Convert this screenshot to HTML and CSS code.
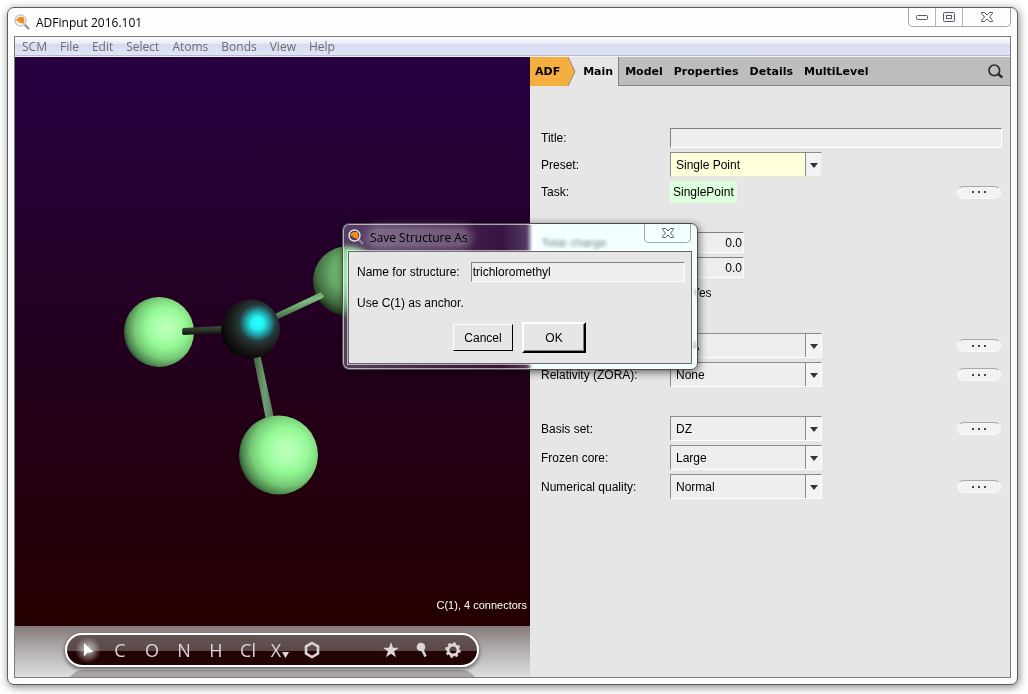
FILE: index.html
```html
<!DOCTYPE html>
<html lang="en">
<head>
  <meta charset="UTF-8">
  <meta name="viewport" content="width=device-width, initial-scale=1.0">
  <title>ADFinput 2016.101</title>
  <link rel="stylesheet" href="styles.css">
</head>
<body>
  <div class="window">
    <header class="titlebar">
      <svg class="app-icon" viewBox="0 0 17 17" width="17" height="17">
        <path d="M10 10l5 5" stroke="#8a8a8a" stroke-width="2"/>
        <circle cx="6.500" cy="6.500" r="5.500" fill="#f4f4f4" stroke="#c9c9c9" stroke-width="1.400"/>
        <path d="M2.500 5l3-2 4 0 1 4-1 3-2-1-2 0-1-2-2 0z" fill="#f58a1f"/>
      </svg>
      <span class="title">ADFinput 2016.101</span>
      <div class="window-buttons">
        <button type="button" aria-label="Minimize">
          <svg viewBox="0 0 12 5" width="12" height="5"><rect x=".5" y=".5" width="11" height="4" rx="1" fill="#fff" stroke="#55586a"/></svg>
        </button>
        <button type="button" aria-label="Maximize">
          <svg viewBox="0 0 12 10" width="12" height="10"><rect x=".5" y=".5" width="11" height="9" rx="1" fill="#f4f4f4" stroke="#55586a"/><rect x="3.500" y="3.500" width="5" height="3" fill="#fff" stroke="#55586a"/></svg>
        </button>
        <button type="button" class="close" aria-label="Close">
          <svg viewBox="0 0 12 10" width="12" height="10"><path d="M.5.5h3l2.500 2.500 2.500-2.500h3v1L8.500 5l3 3.500v1h-3L6 7 3.500 9.500h-3v-1L3.500 5l-3-3.500z" fill="#fff" stroke="#55586a"/></svg>
        </button>
      </div>
    </header>

    <div class="client">
      <nav class="menubar">
        <a href="#">SCM</a>
        <a href="#">File</a>
        <a href="#">Edit</a>
        <a href="#">Select</a>
        <a href="#">Atoms</a>
        <a href="#">Bonds</a>
        <a href="#">View</a>
        <a href="#">Help</a>
      </nav>

      <main class="workspace">
        <section class="editor">
          <div class="viewport">
            <svg class="molecule" viewBox="15 57 515 569" preserveAspectRatio="xMinYMin meet">
              <defs>
                <radialGradient id="chlorine" cx=".6" cy=".44" r=".64">
                  <stop offset="0" stop-color="#bdffbd"/>
                  <stop offset=".2" stop-color="#b0ffb0"/>
                  <stop offset=".45" stop-color="#94f894"/>
                  <stop offset=".7" stop-color="#76c976"/>
                  <stop offset=".88" stop-color="#4c844c"/>
                  <stop offset="1" stop-color="#1e361e"/>
                </radialGradient>
                <radialGradient id="chlorine-far" cx=".55" cy=".38" r=".66">
                  <stop offset="0" stop-color="#7cca7c"/>
                  <stop offset=".45" stop-color="#68aa68"/>
                  <stop offset=".75" stop-color="#437043"/>
                  <stop offset="1" stop-color="#0f1d0f"/>
                </radialGradient>
                <radialGradient id="carbon" cx=".62" cy=".4" r=".65">
                  <stop offset="0" stop-color="#2ff"/>
                  <stop offset=".16" stop-color="#25f2f4"/>
                  <stop offset=".32" stop-color="#209ba0"/>
                  <stop offset=".48" stop-color="#26393b"/>
                  <stop offset=".7" stop-color="#1c1c1c"/>
                  <stop offset="1" stop-color="#050505"/>
                </radialGradient>
                <linearGradient id="bond-left" x1="0" y1="0" x2="0" y2="1">
                  <stop offset="0" stop-color="#3d5340"/>
                  <stop offset=".4" stop-color="#2b3a2d"/>
                  <stop offset="1" stop-color="#0d120d"/>
                </linearGradient>
                <linearGradient id="bond-right" x1="0" y1="0" x2=".35" y2="1">
                  <stop offset="0" stop-color="#4b7a4b"/>
                  <stop offset=".5" stop-color="#7fbc80"/>
                  <stop offset="1" stop-color="#334f35"/>
                </linearGradient>
                <linearGradient id="bond-bottom" x1="0" y1="0" x2="1" y2="0">
                  <stop offset="0" stop-color="#3d5c3e"/>
                  <stop offset=".55" stop-color="#6f9f70"/>
                  <stop offset="1" stop-color="#537a54"/>
                </linearGradient>
              </defs>
              <circle cx="348" cy="281" r="35" fill="url(#chlorine-far)"/>
              <circle cx="159" cy="332" r="35" fill="url(#chlorine)"/>
              <path d="M183 328l40-2v7l-40 2q-2-3 0-7z" fill="url(#bond-left)"/>
              <path d="M275 314l46-22 3 4-1 2-45 21z" fill="url(#bond-right)"/>
              <path d="M253 355l7-1 14 64-8 2z" fill="url(#bond-bottom)"/>
              <circle cx="250.500" cy="329" r="29.500" fill="url(#carbon)"/>
              <circle cx="278.500" cy="455" r="39.500" fill="url(#chlorine)"/>
            </svg>
            <p class="status">C(1), 4 connectors</p>
          </div>

          <div class="toolbar">
            <div class="pill">
              <button type="button" class="tool active" aria-label="Select">
                <svg viewBox="0 0 12 16" width="12" height="16"><path d="M2 1l9.500 9-4 .5L5 11l-3 3.500z" fill="#fff"/></svg>
              </button>
              <button type="button" class="tool">C</button>
              <button type="button" class="tool">O</button>
              <button type="button" class="tool">N</button>
              <button type="button" class="tool">H</button>
              <button type="button" class="tool">Cl</button>
              <button type="button" class="tool">X<svg class="caret" viewBox="0 0 7 6" width="7" height="6"><path d="M0 0h7L3.500 6z" fill="#ddd6d6"/></svg></button>
              <button type="button" class="tool" aria-label="Ring">
                <svg viewBox="0 0 16 18" width="16" height="18"><path d="M8 2l6 3.500v7L8 16l-6-3.500v-7z" fill="none" stroke="#ddd6d6" stroke-width="2.600"/></svg>
              </button>
              <div class="extras">
                <button type="button" class="tool" aria-label="Favorites">
                  <svg viewBox="0 0 16 16" width="16" height="16"><path d="M8 0l2 5.700h6l-4.900 3.600L13 15.300 8 11.700 3 15.300l1.900-6L0 5.700h6z" fill="#ddd6d6"/></svg>
                </button>
                <button type="button" class="tool" aria-label="Pre-optimize">
                  <svg viewBox="0 0 12 16" width="12" height="16"><circle cx="5" cy="5" r="4.300" fill="#ddd6d6"/><path d="M6 7l3.500 7.500" stroke="#ddd6d6" stroke-width="2.600"/></svg>
                </button>
                <button type="button" class="tool" aria-label="Settings">
                  <svg viewBox="0 0 16 16" width="16" height="16"><circle cx="8" cy="8" r="5" fill="none" stroke="#ddd6d6" stroke-width="2.800"/><circle cx="8" cy="8" r="6.900" fill="none" stroke="#ddd6d6" stroke-width="1.800" stroke-dasharray="2.700 2.720"/></svg>
                </button>
              </div>
            </div>
          </div>
        </section>

        <section class="panel">
          <nav class="tabs">
            <a href="#" class="tab adf">ADF<svg class="tip" viewBox="0 0 8 29" width="8" height="29"><path d="M0 0l7 14.500L0 29z" fill="#f6ae40"/><path d="M0 0l7 14.500L0 29" fill="none" stroke="#8a8a8a"/></svg></a>
            <a href="#" class="tab current">Main</a>
            <a href="#" class="tab">Model</a>
            <a href="#" class="tab">Properties</a>
            <a href="#" class="tab">Details</a>
            <a href="#" class="tab">MultiLevel</a>
            <button type="button" class="search" aria-label="Search">
              <svg viewBox="0 0 15 15" width="15" height="15"><circle cx="6.300" cy="6.300" r="5.300" fill="none" stroke="#2c2c2c" stroke-width="1.700"/><path d="M10 10l4.300 3.600" stroke="#2c2c2c" stroke-width="2.400"/></svg>
            </button>
          </nav>

          <form class="settings">
            <div class="group">
              <div class="row">
                <label for="title">Title:</label>
                <input type="text" id="title" class="field">
              </div>
              <div class="row">
                <label for="preset">Preset:</label>
                <span class="dropdown preset"><select id="preset"><option>Single Point</option></select></span>
              </div>
              <div class="row">
                <span>Task:</span>
                <span class="value">SinglePoint</span>
                <button type="button" class="more" aria-label="Task details"></button>
              </div>
            </div>

            <div class="group">
              <div class="row">
                <label for="charge">Total charge:</label>
                <input type="text" id="charge" class="field number" value="0.0">
              </div>
              <div class="row">
                <input type="text" class="field number" value="0.0" aria-label="Spin polarization">
              </div>
              <div class="row check-row">
                <label class="check"><input type="checkbox">Yes</label>
              </div>
            </div>

            <div class="group">
              <div class="row">
                <span class="dropdown"><select aria-label="XC functional"><option>LDA</option></select></span>
                <button type="button" class="more" aria-label="XC details"></button>
              </div>
              <div class="row">
                <label for="relativity">Relativity (ZORA):</label>
                <span class="dropdown"><select id="relativity"><option>None</option></select></span>
                <button type="button" class="more" aria-label="Relativity details"></button>
              </div>
            </div>

            <div class="group">
              <div class="row">
                <label for="basis">Basis set:</label>
                <span class="dropdown"><select id="basis"><option>DZ</option></select></span>
                <button type="button" class="more" aria-label="Basis details"></button>
              </div>
              <div class="row">
                <label for="core">Frozen core:</label>
                <span class="dropdown"><select id="core"><option>Large</option></select></span>
              </div>
              <div class="row">
                <label for="quality">Numerical quality:</label>
                <span class="dropdown"><select id="quality"><option>Normal</option></select></span>
                <button type="button" class="more" aria-label="Quality details"></button>
              </div>
            </div>
          </form>
        </section>
      </main>
    </div>

    <div class="dialog" role="dialog" aria-labelledby="dialog-title">
      <header class="dialog-bar">
        <svg class="app-icon" viewBox="0 0 17 17" width="17" height="17">
          <path d="M10 10l5 5" stroke="#8a8a8a" stroke-width="2"/>
          <circle cx="6.500" cy="6.500" r="5.500" fill="#4d3d55" stroke="#e4e0e6" stroke-width="1.400"/>
          <path d="M2.500 5l3-2 4 0 1 4-1 3-2-1-2 0-1-2-2 0z" fill="#f58a1f"/>
        </svg>
        <span class="title" id="dialog-title">Save Structure As</span>
        <div class="window-buttons">
          <button type="button" class="close" aria-label="Close">
            <svg viewBox="0 0 12 10" width="12" height="10"><path d="M.5.5h3l2.500 2.500 2.500-2.500h3v1L8.500 5l3 3.500v1h-3L6 7 3.500 9.500h-3v-1L3.500 5l-3-3.500z" fill="#fff" stroke="#55586a"/></svg>
          </button>
        </div>
      </header>
      <form class="dialog-body">
        <div class="name-row">
          <label for="structure">Name for structure:</label>
          <input type="text" id="structure" class="field" value="trichloromethyl">
        </div>
        <p>Use C(1) as anchor.</p>
        <div class="actions">
          <button type="button" class="push">Cancel</button>
          <button type="button" class="push default">OK</button>
        </div>
      </form>
    </div>
  </div>
</body>
</html>
```

FILE: styles.css
```css
* {
  box-sizing: border-box;
}
body {
  margin: 0;
  min-height: 100vh;
  padding: 7px 10px 9px 7px;
  display: flex;
  background-color: #fff;
  font-family: "Liberation Sans", Arial, sans-serif;
  font-size: 12px;
  color: #000;
}
button, input, select {
  font: inherit;
  color: inherit;
  margin: 0;
}
a {
  color: inherit;
  text-decoration: none;
}
p {
  margin: 0;
}
svg {
  display: block;
}

/* window frame */
.window {
  position: relative;
  flex: 1;
  display: flex;
  flex-direction: column;
  padding: 0 6px 6px;
  border: 1px solid #5c5c5c;
  border-radius: 7px;
  background-color: #fdfdfd;
  box-shadow: 1px 2px 8px rgba(0, 0, 0, 0.5);
}
.titlebar {
  display: flex;
  align-items: center;
  height: 28px;
}
.app-icon {
  flex: none;
  margin-right: 5px;
}
.title {
  font-family: "Open Sans", "Noto Sans", sans-serif;
  font-size: 12px;
}
.window-buttons {
  display: flex;
  align-self: flex-start;
  margin-left: auto;
  border: 1px solid #a5a5a5;
  border-top: none;
  border-radius: 0 0 5px 5px;
}
.window-buttons button {
  display: flex;
  align-items: center;
  justify-content: center;
  width: 27px;
  height: 18px;
  padding: 0;
  border: none;
  border-right: 1px solid #b5b5b5;
  background: none;
}
.window-buttons .close {
  width: 47px;
  border-right: none;
}
.client {
  flex: 1;
  display: flex;
  flex-direction: column;
  border: 1px solid #7b7b7b;
}
.menubar {
  display: flex;
  align-items: center;
  gap: 13px;
  height: 20px;
  padding: 0 7px;
  border-bottom: 1px solid #f2f2f2;
  background: linear-gradient(#fbfcfe 0, #e6ebf6 7px, #d4dbed 7px, #dfe5f6 18px, #b4bac8 18px);
  font-family: "Open Sans", "Noto Sans", sans-serif;
  color: #6d6d6d;
}

/* molecule editor */
.workspace {
  flex: 1;
  display: grid;
  grid-template-columns: minmax(0, 515fr) minmax(0, 480fr);
}
.editor {
  display: flex;
  flex-direction: column;
}
.viewport {
  position: relative;
  flex: 1;
  overflow: hidden;
  background: linear-gradient(#260041, #23001f 50%, #240000);
}
.molecule {
  position: absolute;
  width: 100%;
  height: 100%;
}
.status {
  position: absolute;
  right: 3px;
  bottom: 15px;
  font-size: 11px;
  color: #fff;
}
.toolbar {
  position: relative;
  height: 51px;
  padding: 7px 51px 0 50px;
  overflow: hidden;
  background: linear-gradient(#857a7a, #b1acac 45%, #dedede);
}
.pill {
  position: relative;
  display: flex;
  align-items: center;
  height: 34px;
  padding: 0 9px 0 5px;
  border: 2px solid #fff;
  border-radius: 17px;
  background: linear-gradient(#655454, #5b4949 52%, #220202 52%, #240505);
  box-shadow: 0 2px 4px rgba(0, 0, 0, 0.6);
}
.toolbar::before {
  content: "";
  position: absolute;
  top: 42px;
  left: 51px;
  right: 51px;
  height: 34px;
  border: 2px solid #d8d6d6;
  border-radius: 17px;
  background-color: #aba6a6;
}
.tool {
  display: flex;
  align-items: center;
  justify-content: center;
  width: 32px;
  height: 30px;
  padding: 0;
  border: none;
  background: none;
  font-family: "Open Sans", "Noto Sans", sans-serif;
  font-size: 18px;
  font-weight: 500;
  color: #ddd6d6;
}
.active {
  background: radial-gradient(circle, rgba(255, 255, 255, 0.7), rgba(255, 255, 255, 0) 13px);
}
.caret {
  margin-top: 10px;
  margin-left: 1px;
}
.extras {
  display: flex;
  margin-left: auto;
}
.extras .tool {
  width: 31px;
}

/* settings panel */
.panel {
  background-color: #e6e6e6;
}
.tabs {
  display: flex;
  height: 29px;
  background-color: #bdbdbd;
  box-shadow: inset 0 -1px #828282;
  font-family: "DejaVu Sans", Verdana, sans-serif;
  font-size: 11px;
  font-weight: bold;
  line-height: 29px;
}
.tab {
  padding: 0 5px 0 6px;
}
.adf {
  position: relative;
  padding: 0 8px 0 5px;
  background-color: #f6ae40;
}
.tip {
  position: absolute;
  top: 0;
  left: 100%;
}
.current {
  padding-left: 15px;
  border-right: 1px solid #828282;
  background-color: #e6e6e6;
}
.search {
  margin-left: auto;
  padding: 0 7px;
  border: none;
  background: none;
}
.settings {
  display: flex;
  flex-direction: column;
  gap: 29px;
  padding: 42px 8px 42px 11px;
}
.group {
  display: flex;
  flex-direction: column;
  gap: 4px;
}
.row {
  display: grid;
  grid-template-columns: 129px 1fr auto;
  align-items: center;
}
.field {
  width: 100%;
  height: 20px;
  padding: 0 1px;
  border: 1px solid #fff;
  border-top-color: #828282;
  border-left-color: #828282;
  border-radius: 0;
  outline: none;
  background-color: #eee;
}
.row .field {
  grid-column: 2 / 4;
}
.row .number {
  width: 74px;
  height: 21px;
  text-align: right;
}
.check-row {
  height: 22px;
}
.check {
  grid-column: 2;
  display: flex;
  align-items: center;
  gap: 9px;
}
.check input {
  width: 13px;
  height: 13px;
}
.dropdown {
  position: relative;
  grid-column: 2;
  width: 152px;
  height: 25px;
  border: 1px solid #fff;
  border-top-color: #8c8c8c;
  border-left-color: #8c8c8c;
  background: linear-gradient(to left, #f3f3f3 15px, #8c8c8c 15px, #8c8c8c 16px, #eee 16px);
}
.dropdown::after {
  content: "";
  position: absolute;
  top: 10px;
  right: 3px;
  border: 4px solid transparent;
  border-top: 5px solid #333;
  border-bottom: none;
  pointer-events: none;
}
.dropdown select {
  width: 100%;
  height: 100%;
  padding: 0 20px 0 5px;
  border: none;
  outline: none;
  background: none;
  appearance: none;
}
.preset {
  border-right-color: #e9e9cf;
  border-bottom-color: #e9e9cf;
  background: linear-gradient(to left, #f3f3f3 15px, #8c8c8c 15px, #8c8c8c 16px, #ffffdc 16px);
}
.value {
  justify-self: start;
  padding: 0 3px;
  background-color: #dfd;
  line-height: 22px;
}
.more {
  display: flex;
  align-items: center;
  justify-content: center;
  width: 44px;
  height: 13px;
  margin-right: 1px;
  padding: 0;
  border: 1px solid #fafafa;
  border-top-color: #a8a8a8;
  border-radius: 7px;
  background-color: #f3f3f3;
}
.more::before {
  content: "";
  width: 14px;
  height: 2px;
  background: repeating-linear-gradient(to right, #444 0, #444 2px, transparent 2px, transparent 6px);
}

/* save dialog */
.dialog {
  position: absolute;
  top: 215px;
  left: 334px;
  width: 356px;
  padding: 0 5px 5px;
  border: 1px solid #4c4c50;
  border-radius: 7px;
  background: linear-gradient(to right, rgba(220, 255, 255, 0.25), rgba(220, 255, 255, 0.08) 45%, rgba(220, 255, 255, 0.4) 60%);
  box-shadow: inset 0 0 0 1px rgba(255, 255, 255, 0.6), 1px 2px 9px rgba(0, 0, 0, 0.6);
  backdrop-filter: blur(2px) brightness(1.2);
}
.dialog-bar {
  display: flex;
  align-items: center;
  height: 27px;
}
.dialog-bar .title {
  border-radius: 8px;
  background-color: rgba(255, 255, 255, 0.25);
  box-shadow: 0 0 8px 4px rgba(255, 255, 255, 0.25);
}
.dialog-bar .close {
  width: 45px;
}
.dialog-bar .window-buttons {
  margin-right: 1px;
}
.dialog-body {
  padding: 10px 6px 10px 8px;
  border: 1px solid #66666c;
  outline: 1px solid rgba(255, 255, 255, 0.6);
  background-color: #e6e6e6;
}
.name-row {
  display: flex;
  align-items: center;
  gap: 11px;
  margin-bottom: 14px;
}
.name-row label {
  white-space: nowrap;
}
.actions {
  display: flex;
  align-items: center;
  justify-content: center;
  gap: 9px;
  margin-top: 12px;
  padding-right: 3px;
}
.push {
  width: 60px;
  height: 27px;
  padding: 0;
  border: 1px solid #fff;
  border-right: 1px solid #000;
  border-bottom: 1px solid #000;
  border-radius: 0;
  background-color: #e6e6e6;
}
.default {
  width: 64px;
  height: 31px;
  border-width: 2px;
  box-shadow: inset -1px -1px #828282;
}
```
